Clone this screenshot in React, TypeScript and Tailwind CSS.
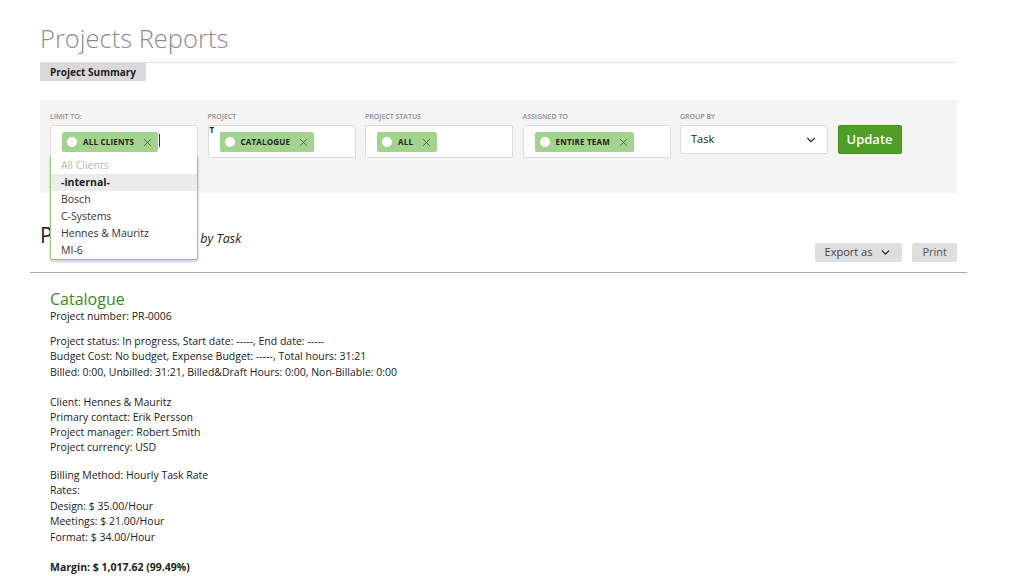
import { ChevronDown, X } from 'lucide-react'

const font = { fontFamily: '"Open Sans", "Liberation Sans", sans-serif' }

function Chip({ label }: { label: string }) {
  return (
    <div className="flex items-center h-[20px] bg-[#a3d38c] rounded-[2px] pl-[5px] pr-[4px] gap-[6px]">
      <span className="w-[10px] h-[10px] rounded-full bg-white" />
      <span className="text-[8px] font-bold text-[#222] tracking-[0.2px] leading-none">{label}</span>
      <X className="w-[13px] h-[13px] text-[#4a4a4a] ml-[1px]" strokeWidth={1.4} />
    </div>
  )
}

function Field({ label, chip, children }: { label: string; chip: string; children?: React.ReactNode }) {
  return (
    <div className="w-[148px] flex flex-col">
      <div className="text-[7px] font-semibold text-[#8e8e8e] uppercase h-[12px] leading-[12px] mb-[2px]">{label}</div>
      <div className="relative h-[33px] bg-white border border-[#dcdcdc] rounded-[2px] pl-[11px] pt-[6px] flex items-start">
        <Chip label={chip} />
        {children}
      </div>
    </div>
  )
}

const clients = ['-internal-', 'Bosch', 'C-Systems', 'Hennes & Mauritz', 'MI-6']

export default function App() {
  return (
    <div className="bg-white min-h-[576px] w-[1024px] overflow-hidden text-[#222]" style={font}>
      <div className="px-[40px] w-[997px]">
        <h1 className="text-[25.5px] font-light text-[#8c8c8c] leading-[32px] pt-[22px] pb-[8px]">Projects Reports</h1>
        <div className="border-t border-[#e2e2e2]">
          <div className="w-fit bg-[#d9d9d9] text-[10px] font-bold text-[#222] px-[10px] h-[18px] leading-[18px]">
            Project Summary
          </div>
        </div>

        {/* filter panel */}
        <div className="mt-[19px] bg-[#f4f4f4] h-[93px] px-[10px] pt-[11px] flex gap-[9.5px] relative z-10">
          <Field label="Limit to:" chip="ALL CLIENTS">
            <span className="absolute left-[108px] top-[8px] w-px h-[13px] bg-[#333]" />
            <div className="absolute left-[-1px] right-[-1px] top-[30px] bg-white border border-t-0 border-[#93c878] rounded-b-[3px] shadow-[0_2px_3px_rgba(0,0,0,0.2)] pt-[1px]">
              <div className="text-[10.5px] text-[#b8b8b8] h-[17px] leading-[17px] pl-[10px]">All Clients</div>
              {clients.map((c, i) => (
                <div
                  key={c}
                  className={`text-[10.5px] h-[17px] leading-[17px] pl-[10px] ${i === 0 ? 'bg-[#ebebeb] font-bold text-[#222]' : 'text-[#333]'}`}
                >
                  {c}
                </div>
              ))}
            </div>
          </Field>
          <Field label="Project" chip="CATALOGUE">
            <span className="absolute left-[1px] top-[0px] text-[8px] font-bold leading-none text-[#222]">T</span>
          </Field>
          <Field label="Project status" chip="ALL" />
          <Field label="Assigned to" chip="ENTIRE TEAM" />
          <div className="w-[148px] flex flex-col">
            <div className="text-[7px] font-semibold text-[#8e8e8e] uppercase h-[12px] leading-[12px] mb-[2px]">Group by</div>
            <div className="h-[29px] bg-white border border-[#dcdcdc] rounded-[2px] flex items-center justify-between pl-[10px] pr-[9px]">
              <span className="text-[11px] text-[#222]">Task</span>
              <ChevronDown className="w-[14px] h-[14px] text-[#333]" strokeWidth={2} />
            </div>
          </div>
          <div className="pt-[14px]">
            <button className="h-[29px] px-[8px] bg-[#4f9f27] border border-[#47921f] rounded-[2px] text-white text-[13px] font-semibold leading-none">
              Update
            </button>
          </div>
        </div>

        {/* report header */}
        <div className="mt-[29px] h-[26px] flex items-baseline">
          <span className="text-[21px] text-[#222] leading-[26px]">Project Report</span>
          <span className="text-[12.5px] italic text-[#222] ml-[20px]">by Task</span>
        </div>
        <div className="flex justify-end gap-[10px] mt-[-5px]">
          <button className="h-[19px] bg-[#dedede] rounded-[2px] px-[10px] text-[11px] text-[#444] flex items-center gap-[7px]">
            Export as
            <ChevronDown className="w-[13px] h-[13px] text-[#222]" strokeWidth={2.4} />
          </button>
          <button className="h-[19px] bg-[#dedede] rounded-[2px] px-[10px] text-[11px] text-[#555] flex items-center">Print</button>
        </div>
        <div className="-mx-[10px] mt-[10px] border-t border-[#a8a8a8]" />

        {/* report body */}
        <div className="pl-[10px] pt-[16px] text-[10.5px] leading-[15.6px] text-[#222]">
          <div className="text-[16px] text-[#3d8c20] leading-[20px]">Catalogue</div>
          <div>Project number: PR-0006</div>
          <div className="mt-[9px]">
            <div>Project status: In progress, Start date: -----, End date: -----</div>
            <div>Budget Cost: No budget, Expense Budget: -----, Total hours: 31:21</div>
            <div>Billed: 0:00, Unbilled: 31:21, Billed&amp;Draft Hours: 0:00, Non-Billable: 0:00</div>
          </div>
          <div className="mt-[15px] leading-[14.8px]">
            <div>Client: Hennes &amp; Mauritz</div>
            <div>Primary contact: Erik Persson</div>
            <div>Project manager: Robert Smith</div>
            <div>Project currency: USD</div>
          </div>
          <div className="mt-[13px]">
            <div>Billing Method: Hourly Task Rate</div>
            <div>Rates:</div>
            <div>Design: $ 35.00/Hour</div>
            <div>Meetings: $ 21.00/Hour</div>
            <div>Format: $ 34.00/Hour</div>
          </div>
          <div className="mt-[14px] font-bold">Margin: $ 1,017.62 (99.49%)</div>
        </div>
      </div>
    </div>
  )
}
